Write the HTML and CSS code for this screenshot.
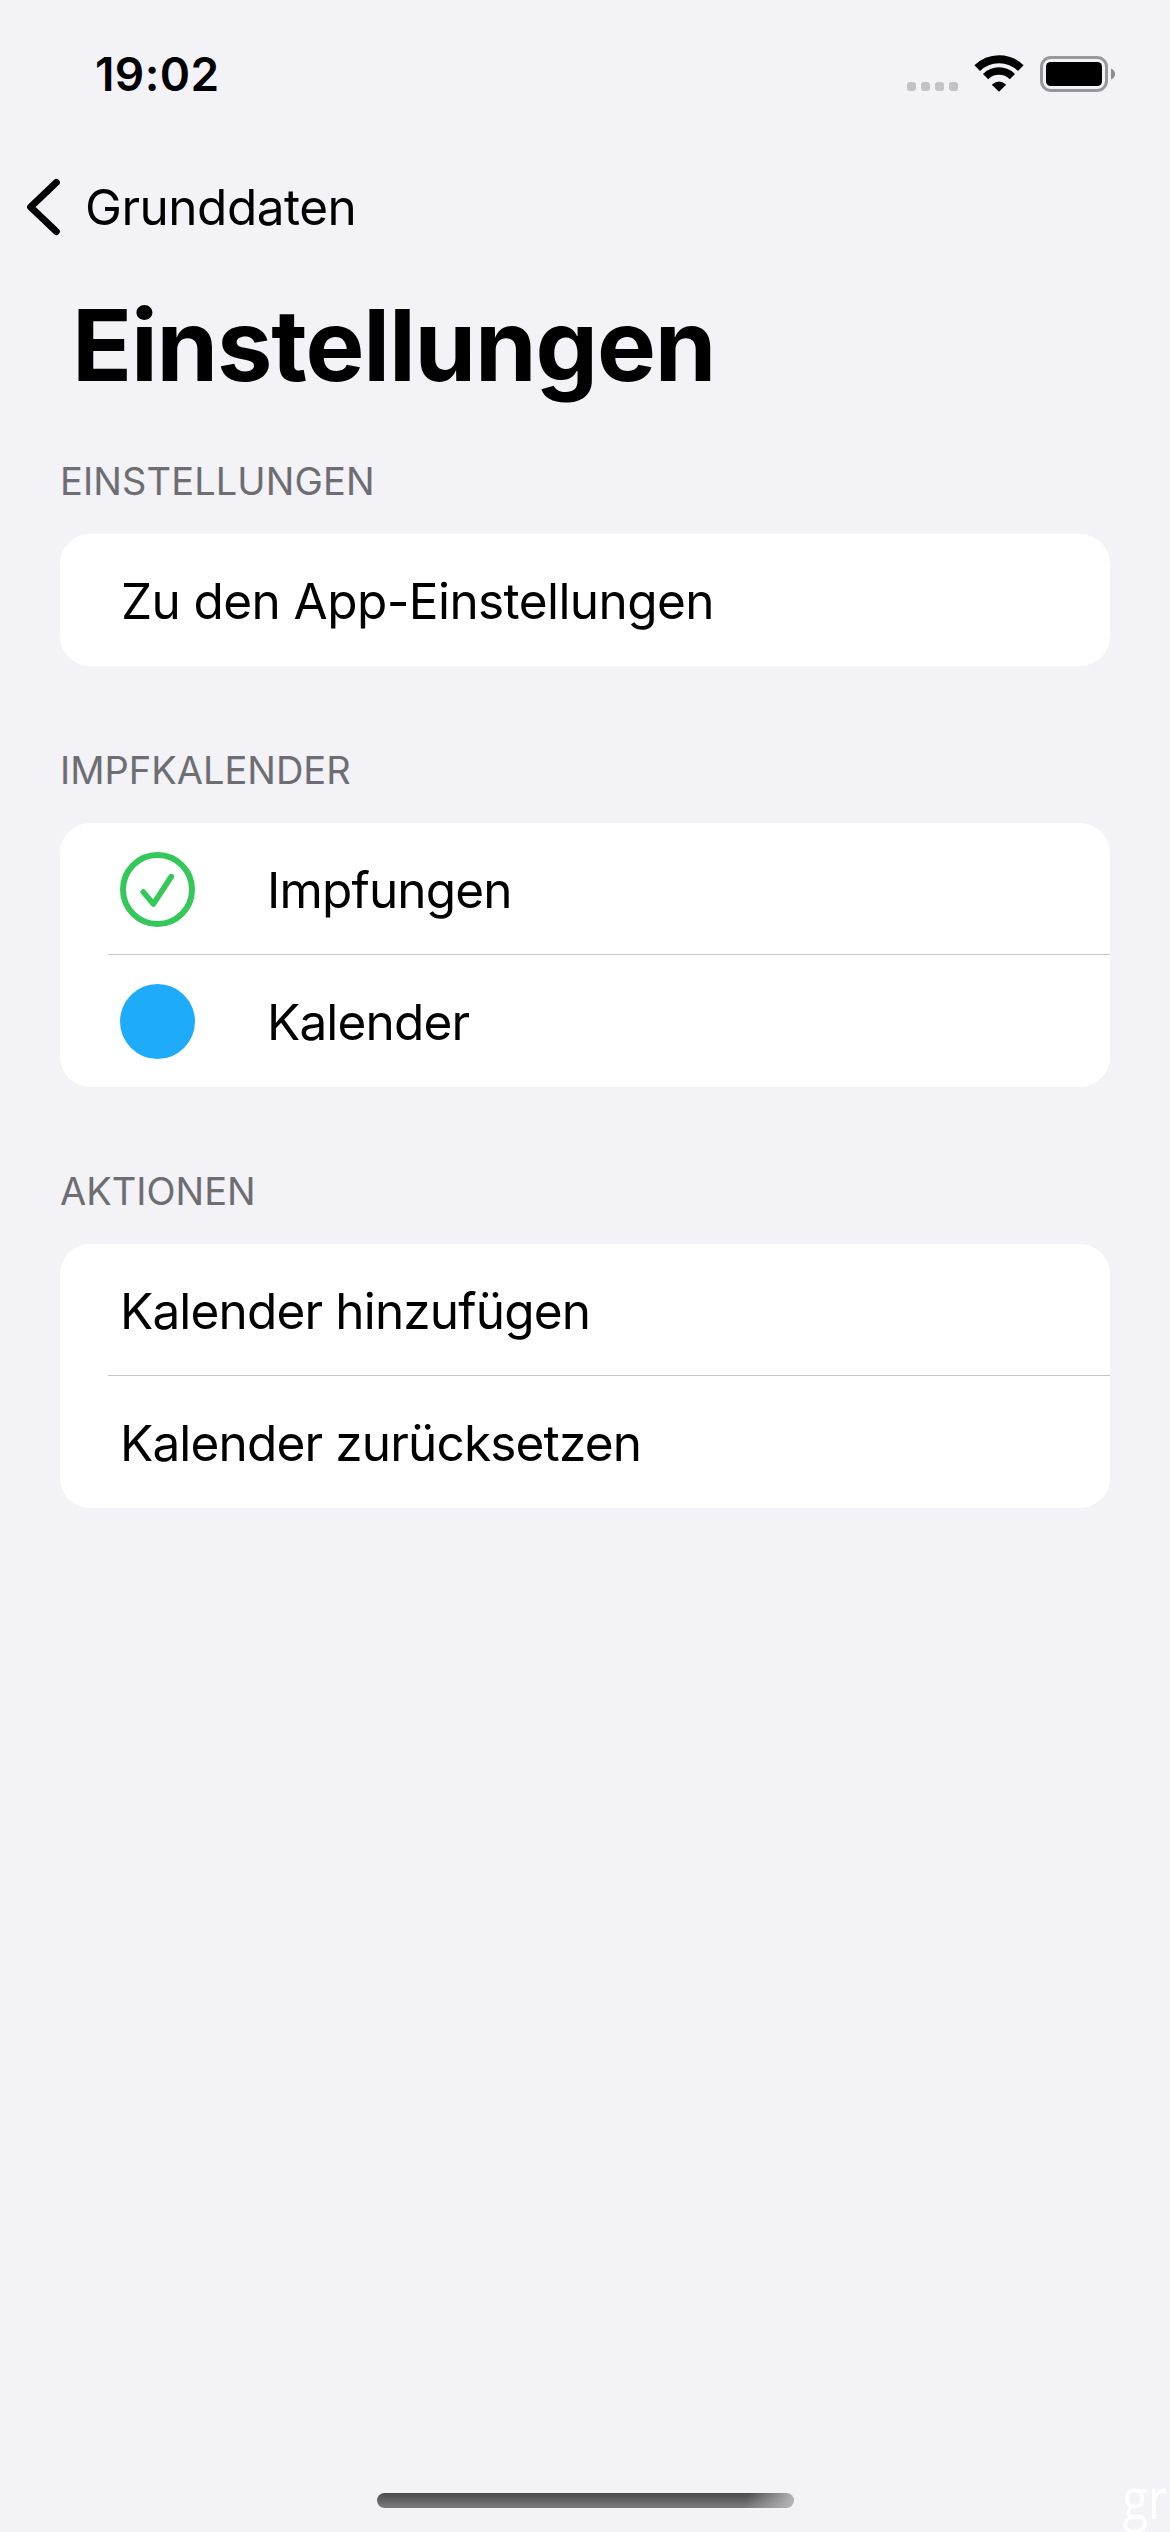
FILE: index.html
```html
<!DOCTYPE html>
<html lang="de">
<head>
<meta charset="utf-8">
<title>Einstellungen</title>
<link rel="stylesheet" href="styles.css">
</head>
<body>
<div class="screen">
  <header class="status-bar">
    <span class="time">19:02</span>
    <div class="status-icons">
      <div class="signal"><i></i><i></i><i></i><i></i></div>
      <svg class="wifi" width="50" height="38" viewBox="0 0 50 38" fill="none" stroke="#000">
        <path d="M3.2 13.1A31 31 0 0 1 46.8 13.1" stroke-width="8"/>
        <path d="M11.6 21.6A19 19 0 0 1 38.4 21.6" stroke-width="7.4"/>
        <path d="M25 36.8 18.4 30.2Q18 29.6 18.5 29.1 25 24 31.5 29.1 32 29.6 31.6 30.2Z" fill="#000" stroke="none"/>
      </svg>
      <svg class="battery" width="76" height="36" viewBox="0 0 76 36">
        <rect x="1.5" y="1.5" width="65" height="33" rx="9.5" fill="none" stroke="#98979b" stroke-width="3"/>
        <rect x="6" y="6" width="56" height="24" rx="4.5"/>
        <path d="M71 12.5Q75 14.2 75 18T71 23.5Z" fill="#8c8b8f"/>
      </svg>
    </div>
  </header>
  <nav class="nav-bar">
    <svg class="chevron" width="33" height="58" viewBox="0 0 33 58" fill="none" stroke="#000" stroke-width="7" stroke-linecap="round" stroke-linejoin="round">
      <path d="M29.3 4.5 3.6 29 29.3 53.5"/>
    </svg>
    <span class="back">Grunddaten</span>
  </nav>
  <h1 class="title">Einstellungen</h1>
  <main class="sections">
    <section>
      <h2 class="label wide">EINSTELLUNGEN</h2>
      <div class="card">
        <div class="row app">Zu den App-Einstellungen</div>
      </div>
    </section>
    <section>
      <h2 class="label">IMPFKALENDER</h2>
      <div class="card">
        <div class="row with-icon">
          <svg class="icon" width="75" height="75" viewBox="0 0 75 75" fill="none" stroke="#34c759" stroke-width="6" stroke-linecap="round" stroke-linejoin="round">
            <circle cx="37.5" cy="37.5" r="34.5"/>
            <path d="M23.3 40 33.4 52 51.3 24.6" stroke-width="5.6"/>
          </svg>
          <span>Impfungen</span>
        </div>
        <div class="row with-icon">
          <span class="icon dot"></span>
          <span>Kalender</span>
        </div>
      </div>
    </section>
    <section>
      <h2 class="label">AKTIONEN</h2>
      <div class="card">
        <div class="row">Kalender hinzufügen</div>
        <div class="row">Kalender zurücksetzen</div>
      </div>
    </section>
  </main>
  <footer class="bottom">
    <div class="home-indicator"></div>
    <span class="corner">gr</span>
  </footer>
</div>
</body>
</html>
```
FILE: styles.css
```css
* { box-sizing: border-box; }
body {
  margin: 0;
  background: #f2f2f7;
  color: #000;
  font-family: Inter, "Liberation Sans", sans-serif;
}
.screen {
  width: 1170px;
  height: 2532px;
  display: flex;
  flex-direction: column;
  overflow: hidden;
  position: relative;
}
.status-bar {
  height: 177px;
  padding: 46px 54px 0 95px;
  display: flex;
  justify-content: space-between;
  align-items: flex-start;
}
.time {
  font-size: 46px;
  font-weight: 600;
  line-height: 56px;
  letter-spacing: 0.4px;
}
.status-icons {
  display: flex;
  align-items: flex-start;
  padding-top: 9px;
}
.signal {
  display: flex;
  gap: 5px;
  padding-top: 27px;
  margin-right: 16px;
}
.signal i {
  width: 9px;
  height: 9px;
  border-radius: 3px;
  background: #c3c2c7;
}
.battery { margin: 1px 0 0 16px; }
.nav-bar {
  height: 60px;
  padding-left: 27px;
  display: flex;
  align-items: center;
}
.back {
  margin-left: 25px;
  font-size: 49.5px;
  line-height: 60px;
  letter-spacing: -0.5px;
}
.title {
  margin: 48px 0 53px 72px;
  font-size: 99px;
  font-weight: 700;
  line-height: 120px;
  letter-spacing: -1.17px;
}
.sections {
  padding: 0 60px;
  display: flex;
  flex-direction: column;
  gap: 81px;
}
.label {
  margin: 0 0 30px;
  font-size: 38px;
  font-weight: 400;
  line-height: 46px;
  color: #6d6d72;
}
.label.wide { letter-spacing: 0.12px; }
.card {
  background: #fff;
  border-radius: 30px;
  overflow: hidden;
}
.row {
  height: 132px;
  margin-left: 48px;
  padding: 2px 0 0 12px;
  display: flex;
  align-items: center;
  font-size: 49.5px;
  line-height: 60px;
  letter-spacing: -0.84px;
}
.row + .row { box-shadow: 0 -1px #c6c6c8; }
.row.app { padding-left: 13px; letter-spacing: -0.58px; }
.row.with-icon { gap: 72px; }
.icon { flex: none; margin-top: -1px; }
.dot {
  width: 75px;
  height: 75px;
  border-radius: 50%;
  background: #1eacfa;
}
.bottom {
  margin-top: auto;
  height: 39px;
  display: flex;
  justify-content: center;
}
.home-indicator {
  width: 417px;
  height: 15px;
  border-radius: 8px;
  background:
    linear-gradient(110deg, rgba(178,178,180,0) 88%, #b2b2b4 99%),
    linear-gradient(#4b4b4d, #7b7b7e);
}
.corner {
  position: absolute;
  right: 3px;
  bottom: 0;
  color: #fff;
  font: 56px/70px "Open Sans", sans-serif;
  transform: scaleX(0.84);
  transform-origin: right;
}
```
